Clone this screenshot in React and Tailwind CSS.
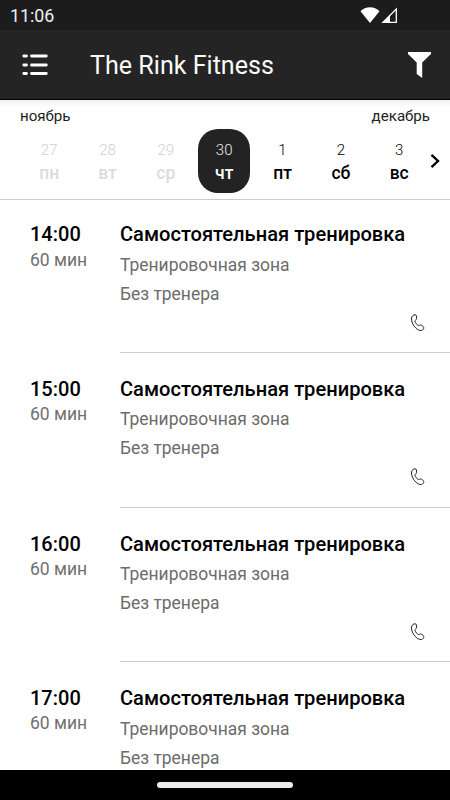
const days = [
  { num: '27', name: 'пн', state: 'past' },
  { num: '28', name: 'вт', state: 'past' },
  { num: '29', name: 'ср', state: 'past' },
  { num: '30', name: 'чт', state: 'active' },
  { num: '1', name: 'пт', state: 'next' },
  { num: '2', name: 'сб', state: 'next' },
  { num: '3', name: 'вс', state: 'next' },
];

const sessions = [
  { time: '14:00', height: 'h-[155px]', gap: 'mt-[4px]', lead: 'leading-[26px]' },
  { time: '15:00', height: 'h-[155px]', gap: 'mt-[3px]', lead: 'leading-[24px]' },
  { time: '16:00', height: 'h-[154px]', gap: 'mt-[3px]', lead: 'leading-[24px]' },
  { time: '17:00', height: 'h-[155px]', gap: 'mt-[4px]', lead: 'leading-[24px]' },
];

const dayStyles = {
  past: 'text-[#dcdcdc]',
  active: 'bg-[#232323] text-white',
  next: 'text-black',
};

const numStyles = {
  past: 'text-[#d0d0d0]',
  active: 'text-[#eeeeee]',
  next: 'text-black',
};

function StatusBar() {
  return (
    <div className="flex h-[30px] shrink-0 items-center justify-between bg-[#1c1c1c] pl-[10px] pr-[52px] text-white">
      <span className="pt-[2px] text-[17.800px] leading-[20px] text-[#f0f0f0]">11:06</span>
      <div className="flex items-center gap-[1px]">
        <svg width="20" height="18" viewBox="0 0 20 18" fill="white">
          <path d="M0.5 5.2C5.5-.1 14.500-.1 19.500 5.200L10 17z" />
        </svg>
        <svg width="17" height="17" viewBox="0 0 17 17">
          <path d="M15.300 2V15.300H2z" fill="none" stroke="white" strokeWidth="1.300" />
          <path d="M1 15.800L9 7.800V15.800z" fill="white" />
        </svg>
      </div>
    </div>
  );
}

function Header() {
  return (
    <header className="flex h-[70px] shrink-0 items-center border-b border-black bg-[#242424] pl-[22px] pr-[18px]">
      <svg width="26" height="22" viewBox="0 0 26 22" stroke="white" strokeWidth="2.800" strokeLinecap="round">
        <path d="M1.800 2H4.500M9.500 2H24.300M1.800 11H4.500M9.500 11H24.300M1.800 19.500H4.500M9.500 19.500H24.300" />
      </svg>
      <h1 className="ml-[42px] pt-[2px] text-[25.100px] leading-[30px] whitespace-nowrap text-[#fafafa]">The Rink Fitness</h1>
      <svg className="ml-auto" width="25" height="28" viewBox="0 0 25 28" fill="white">
        <path d="M1 1H24V3L15.200 11.500V27L9.700 23V11.500L1 3z" />
      </svg>
    </header>
  );
}

function Calendar() {
  return (
    <section className="flex h-[100px] shrink-0 flex-col border-b border-[#cbcbcb] bg-linear-to-b from-[#f3f3f3] from-0% to-white to-8%">
      <div className="flex h-[29px] items-center justify-between px-[20px] pt-[3px] text-[15.100px] leading-[20px] text-[#222]">
        <span>ноябрь</span>
        <span>декабрь</span>
      </div>
      <div className="flex items-center pl-[20px]">
        <div className="grid w-[408.400px] shrink-0 grid-cols-7">
          {days.map((d) => (
            <div
              key={d.num}
              className={`mx-auto flex h-[64px] w-[52px] flex-col items-center rounded-[20px] pt-[11px] ${dayStyles[d.state]}`}
            >
              <span className={`text-[15px] leading-[20px] font-light ${numStyles[d.state]}`}>{d.num}</span>
              <span className="mt-[2px] text-[17.500px] leading-[22px] font-medium">{d.name}</span>
            </div>
          ))}
        </div>
        <svg className="ml-px shrink-0" width="14" height="16" viewBox="0 0 14 16" fill="none" stroke="black" strokeWidth="2.400">
          <path d="M2.500 1.800L9 8L2.500 14.200" />
        </svg>
      </div>
    </section>
  );
}

function PhoneIcon() {
  return (
    <svg width="16" height="18" viewBox="0 0 16 18" fill="none" stroke="#222" strokeWidth="1" strokeLinejoin="round">
      <path d="M3 1.500C4.300 .4 6 .5 6.500 2L6.600 4.600C6.500 5.800 4.900 6.200 4.900 7.100C5.300 9 6.800 10.800 8.500 11.500C9.400 11.700 10 10.700 11.300 11.100C12.500 11.500 13.400 12.700 13.700 13.500C14 14.700 13 16.200 11.600 16.500C9 16.900 6.600 15.200 4.700 12.800C2.800 10.500 1.500 7.500 1.500 5C1.500 3.500 1.900 2.300 3 1.500z" />
    </svg>
  );
}

function Session({ time, height, gap, lead }) {
  return (
    <article className={`flex shrink-0 pl-[30px] ${height}`}>
      <div className="w-[90px] shrink-0 pt-[23px]">
        <div className="text-[20px] leading-[26px] font-medium text-black">{time}</div>
        <div className={`text-[17.500px] text-[#707070] ${lead}`}>60 мин</div>
      </div>
      <div className="flex min-w-0 flex-1 flex-col border-b border-[#cbcbcb] pt-[23px]">
        <h2 className="text-[20.100px] leading-[26px] font-medium whitespace-nowrap text-black">Самостоятельная тренировка</h2>
        <p className={`text-[17.450px] leading-[28.500px] text-[#6c6c6c] ${gap}`}>Тренировочная зона</p>
        <p className="text-[17.450px] leading-[28.500px] text-[#6c6c6c]">Без тренера</p>
        <div className="mt-[6px] flex justify-end pr-[24px]">
          <PhoneIcon />
        </div>
      </div>
    </article>
  );
}

export default function App() {
  return (
    <div className="flex h-[800px] w-[450px] flex-col overflow-hidden bg-white font-[Roboto,sans-serif]">
      <StatusBar />
      <Header />
      <Calendar />
      <main className="-mt-[2px] flex min-h-0 flex-1 flex-col overflow-hidden">
        {sessions.map((s) => (
          <Session key={s.time} {...s} />
        ))}
      </main>
      <footer className="flex h-[30px] shrink-0 items-center justify-center bg-black">
        <div className="h-[6px] w-[136px] rounded-full bg-[#ececec]" />
      </footer>
    </div>
  );
}
